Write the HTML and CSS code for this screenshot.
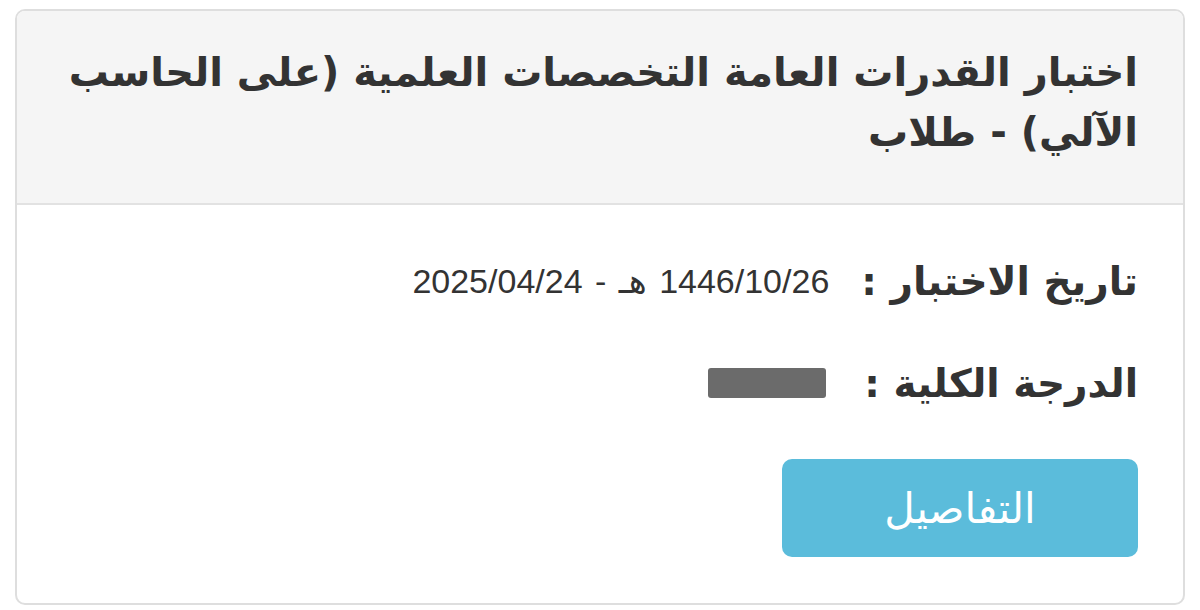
FILE: index.html
```html
<!DOCTYPE html>
<html lang="ar" dir="rtl">
<head>
<meta charset="utf-8">
<link rel="stylesheet" href="styles.css">
</head>
<body>
<div class="card">
  <div class="card-header">
    <h2 class="title">اختبار القدرات العامة التخصصات العلمية (على الحاسب الآلي) - طلاب</h2>
  </div>
  <div class="card-body">
    <div class="row">
      <span class="label">تاريخ الاختبار :</span>
      <span class="value">1446/10/26 هـ - 2025/04/24</span>
    </div>
    <div class="row">
      <span class="label">الدرجة الكلية :</span>
      <span class="masked"></span>
    </div>
    <button class="btn">التفاصيل</button>
  </div>
</div>
</body>
</html>
```
FILE: styles.css
```css
html, body {
  margin: 0;
  padding: 0;
  background: #ffffff;
}
body {
  padding: 9px 15px 5px 15px;
  font-family: "DejaVu Sans", "Liberation Sans", sans-serif;
  color: #333333;
}
.card {
  height: 596px;
  box-sizing: border-box;
  border: 2px solid #dedede;
  border-radius: 10px;
  overflow: hidden;
  background: #ffffff;
}
.card-header {
  background: #f5f5f5;
  border-bottom: 2px solid #e2e2e2;
  height: 194px;
  box-sizing: border-box;
  padding: 31px 45px 0 10px;
}
.title {
  margin: 0;
  font-size: 40px;
  line-height: 60px;
  font-weight: bold;
  color: #333333;
}
.card-body {
  padding: 46px 45px 0 45px;
  display: flex;
  flex-direction: column;
  align-items: flex-start;
}
.row {
  display: flex;
  align-items: center;
  height: 60px;
  margin-bottom: 42px;
}
.label {
  font-size: 39px;
  font-weight: bold;
  color: #333333;
  margin-left: 32px;
}
.value {
  font-family: "Liberation Sans", "DejaVu Sans", sans-serif;
  font-size: 34px;
  word-spacing: 3px;
  color: #333333;
  direction: rtl;
}
.masked {
  display: inline-block;
  width: 118px;
  height: 30px;
  background: #6b6b6b;
  border-radius: 3px;
  margin-right: 6px;
}
.btn {
  margin-top: 4px;
  width: 356px;
  height: 98px;
  background: #5bbcdb;
  border: none;
  border-radius: 10px;
  color: #ffffff;
  font-family: "DejaVu Sans", sans-serif;
  font-size: 42px;
  font-weight: normal;
}
```
